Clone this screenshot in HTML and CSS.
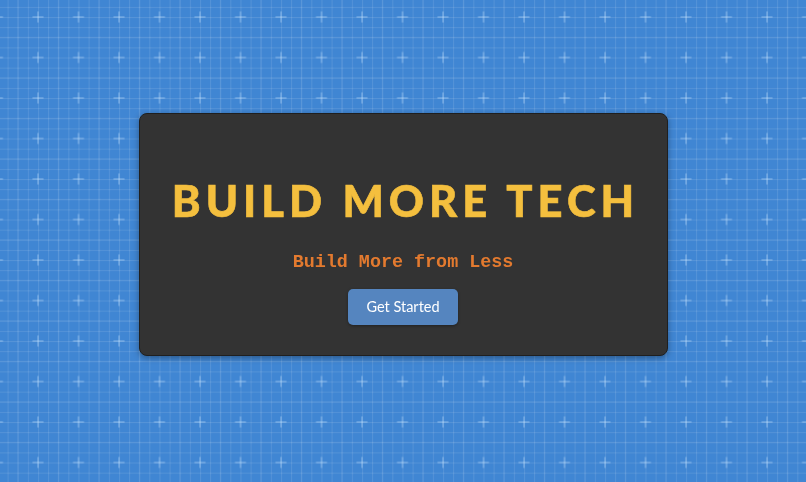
FILE: index.html
```html
<!DOCTYPE html>
<html lang="en">
<head>
<meta charset="utf-8">
<title>Build More Tech</title>
<link rel="stylesheet" href="styles.css">
</head>
<body>
<svg class="grid" xmlns="http://www.w3.org/2000/svg" width="100%" height="100%" aria-hidden="true">
  <defs>
    <pattern id="minor" x="7.6" y="6.9" width="10.125" height="10.125" patternUnits="userSpaceOnUse">
      <rect x="0" y="0" width="1" height="10.125" fill="rgba(255,255,255,0.11)"/>
      <rect x="0" y="0" width="10.125" height="1" fill="rgba(255,255,255,0.11)"/>
    </pattern>
    <pattern id="major" x="17.25" y="-3.75" width="40.5" height="40.5" patternUnits="userSpaceOnUse">
      <rect x="0" y="0" width="1" height="40.5" fill="rgba(255,255,255,0.07)"/>
      <rect x="0" y="0" width="40.5" height="1" fill="rgba(255,255,255,0.07)"/>
      <rect x="20.25" y="15.25" width="1" height="11" fill="rgba(200,230,255,0.55)"/>
      <rect x="15.25" y="20.25" width="11" height="1" fill="rgba(200,230,255,0.55)"/>
    </pattern>
  </defs>
  <rect width="100%" height="100%" fill="url(#minor)"/>
  <rect width="100%" height="100%" fill="url(#major)"/>
</svg>
<main class="stage">
  <section class="card">
    <h1 class="title">BUILD MORE TECH</h1>
    <p class="tagline">Build More from Less</p>
    <button class="cta" type="button">Get Started</button>
  </section>
</main>
</body>
</html>
```
FILE: styles.css
```css
html, body {
  margin: 0;
  padding: 0;
  height: 100%;
}
body {
  background-color: #4086d3;
  font-family: Lato, "Open Sans", sans-serif;
  overflow: hidden;
}
.grid {
  position: fixed;
  top: 0;
  left: 0;
  z-index: 0;
}
.stage {
  position: relative;
  z-index: 1;
  height: 100%;
  box-sizing: border-box;
  padding-bottom: 14px;
  display: flex;
  align-items: center;
  justify-content: center;
}
.card {
  box-sizing: border-box;
  width: 529px;
  height: 243px;
  background: #333333;
  border: 1px solid #1f1f1f;
  border-radius: 8px;
  box-shadow: 0 2px 6px rgba(0, 0, 0, 0.35);
  display: flex;
  flex-direction: column;
  align-items: center;
  padding-top: 60px;
}
.title {
  margin: 0;
  margin-right: -5px;
  font-family: Lato, sans-serif;
  font-weight: 900;
  font-size: 43.5px;
  line-height: 52px;
  letter-spacing: 5px;
  color: #f4bf3e;
  -webkit-text-stroke: 0.6px #f4bf3e;
}
.tagline {
  margin: 26px 0 0;
  font-family: "Liberation Mono", monospace;
  font-weight: 700;
  font-size: 18.4px;
  line-height: 22px;
  color: #e37a2f;
}
.cta {
  margin-top: 15px;
  width: 110px;
  height: 36px;
  border: none;
  border-radius: 5px;
  background: #5585bf;
  color: #ffffff;
  font-family: Lato, sans-serif;
  font-size: 14.5px;
  box-shadow: 0 1px 3px rgba(0, 0, 0, 0.35);
  padding: 0;
}
```
